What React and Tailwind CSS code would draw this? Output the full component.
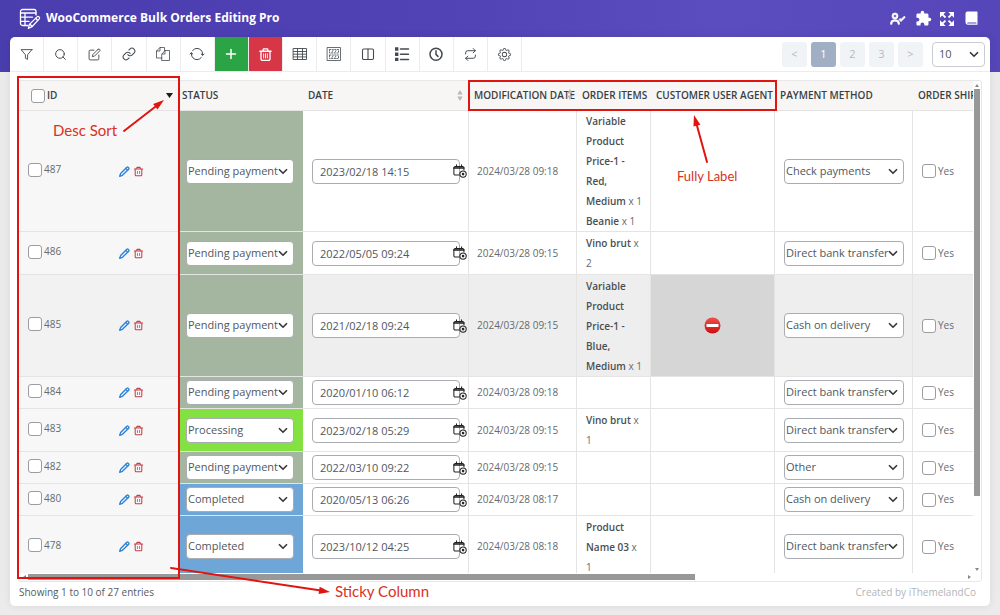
import React from "react";
import { FiFilter, FiSearch, FiEdit, FiLink, FiRepeat } from "react-icons/fi";
import { IoSyncOutline } from "react-icons/io5";
import { BiUserCheck } from "react-icons/bi";
import { MdExtension } from "react-icons/md";
import { ImEnlarge } from "react-icons/im";
import { BsGear } from "react-icons/bs";

function Svg({ size = 16, className = "", children, sw = 1.2 }) {
  return (
    <svg
      width={size}
      height={size}
      viewBox="0 0 16 16"
      fill="none"
      stroke="currentColor"
      strokeWidth={sw}
      strokeLinecap="round"
      strokeLinejoin="round"
      className={className}
      aria-hidden="true"
    >
      {children}
    </svg>
  );
}

const LogoIcon = () => (
  <svg width="22" height="22" viewBox="0 0 22 22" fill="none" stroke="currentColor" strokeWidth="1.3" strokeLinecap="round" strokeLinejoin="round" aria-hidden="true">
    <path d="M9 17.5H3.5A2 2 0 0 1 1.500 15.500V3.500A2 2 0 0 1 3.500 1.500H15A2 2 0 0 1 17 3.500V7" />
    <path d="M1.500 5H17M1.500 9.200H13.500M1.500 13.400H10M6 5V17.500" />
    <path d="M18.400 8.600a1.500 1.500 0 0 1 2 2L13 18.700l-3.600 1.700 1-4z" />
    <path d="M16.600 10.300l2.200 2.200M11 16.200l2 2.100" />
  </svg>
);

const BookIcon = () => (
  <svg width="13" height="15" viewBox="0 0 13 15" aria-hidden="true">
    <path fill="currentColor" fillRule="evenodd" d="M2.500 0.500H12a.5.5 0 0 1 .5.5V13.700H2.600A2.100 2.100 0 0 1 .5 11.600V2.500A2 2 0 0 1 2.500.5zM2.700 11.400a.6.600 0 0 0 0 1.200H11.400V11.400z" />
  </svg>
);

const PagesIcon = () => (
  <Svg sw={0.8}>
    <path d="M7 12H1.500V5L5 1.500H9.500V4.500" />
    <path d="M5 1.500V5H1.500" />
    <path d="M7 8L10 4.500H14.500V14.500H7z" />
    <path d="M10 4.500V8H7" />
  </Svg>
);

const TrashIcon = ({ size = 16, sw = 1.2, ribs = true }) => (
  <Svg size={size} sw={sw}>
    <path d="M2 4.500H14M5.500 4.300V2.800A.8.800 0 0 1 6.300 2H9.700A.8.800 0 0 1 10.500 2.800V4.300" />
    <path d="M3.200 4.600V12.800A1.500 1.500 0 0 0 4.700 14.300H11.300A1.500 1.500 0 0 0 12.800 12.800V4.600" />
    {ribs ? <path d="M6 7.200V11.600M8 7.200V11.600M10 7.200V11.600" strokeWidth="1" /> : <path d="M6.500 8V11M9.500 8V11" strokeWidth="1.100" />}
  </Svg>
);

const GridIcon = () => (
  <Svg sw={0.9}>
    <path d="M1.500 2.500H14.500V13.500H1.500zM1.500 5.500H14.500M1.500 8.200H14.500M1.500 10.900H14.500M5.500 2.500V13.500M10.500 2.500V13.500" />
  </Svg>
);

const RowsIcon = () => (
  <Svg sw={0.8}>
    <path d="M1.500 1.500H14.500V14.500H1.500z" />
    <path d="M3.500 3.500H12.500V7H3.500zM3.500 9H12.500V12.500H3.500z" strokeDasharray="1.200 1.400" />
    <path d="M6 6L7 4.500M9 6L10 4.500M6 11.500L7 10M9 11.500L10 10" />
  </Svg>
);

const ColumnsIcon = () => (
  <Svg sw={1.1}>
    <rect x="2.500" y="3" width="11" height="10.500" rx="1.200" />
    <path d="M8 3V13.500" />
  </Svg>
);

const ListIcon = () => (
  <Svg sw={1.5}>
    <path d="M6.500 3H14.500M6.500 8.200H14.500M6.500 13.400H14.500" />
    <path d="M1 1.300H4.400V4.700H1zM1 6.500H4.400V9.900H1zM1 11.700H4.400V15.100H1z" fill="currentColor" stroke="none" />
  </Svg>
);

const ClockIcon = () => (
  <Svg sw={1.5}>
    <circle cx="8" cy="8.200" r="6" />
    <path d="M8 4.800V8.400L10 10.400" />
  </Svg>
);

const PencilIcon = () => (
  <Svg size={11} sw={2}>
    <path d="M11.400 1.900a1.300 1.300 0 0 1 1.900 0l.8.800a1.300 1.300 0 0 1 0 1.900L5 13.600l-4 1.400 1.400-4z" />
    <path d="M10 3.500L12.500 6" />
  </Svg>
);

const CalendarIcon = () => (
  <Svg size={14} sw={1.2} className="text-[#222]">
    <path d="M7 12.500H2.500A1.500 1.500 0 0 1 1 11V4.500A1.500 1.500 0 0 1 2.500 3H11A1.500 1.500 0 0 1 12.500 4.500V6.500" />
    <path d="M1 4.500H12.500" strokeWidth="1.600" />
    <path d="M4 1V3M9.800 1V3" />
    <circle cx="11.500" cy="11.500" r="3.600" />
    <circle cx="11.500" cy="11.500" r="0.900" fill="currentColor" />
  </Svg>
);

const Chevron = ({ className = "" }) => (
  <svg width="10" height="7" viewBox="0 0 10 7" fill="none" stroke="#333" strokeWidth="1.600" className={className} aria-hidden="true">
    <path d="M1 1.200L5 5.200L9 1.200" />
  </svg>
);

const NoEntry = () => (
  <svg width="17" height="17" viewBox="0 0 17 17" role="img" aria-label="Not available">
    <defs>
      <linearGradient id="stop" x1="0" y1="0" x2="0" y2="1">
        <stop offset="0" stopColor="#f0504a" />
        <stop offset="1" stopColor="#cf0d0d" />
      </linearGradient>
    </defs>
    <circle cx="8.500" cy="8.500" r="8" fill="url(#stop)" />
    <rect x="2.500" y="7" width="12" height="3" rx="0.600" fill="#fff" />
  </svg>
);

const SortArrows = ({ className = "" }) => (
  <svg width="6" height="11" viewBox="0 0 6 11" fill="#b5b8bb" className={className} aria-hidden="true">
    <path d="M3 0L5.700 4.500H.3zM3 11L5.700 6.500H.3z" />
  </svg>
);

const tools = [
  ["Filter", <FiFilter size={13} strokeWidth={1.7} />],
  ["Search", <FiSearch size={13} strokeWidth={1.8} />],
  ["Bulk edit", <FiEdit size={13} strokeWidth={1.7} />],
  ["Bind edit", <FiLink size={14} strokeWidth={1.8} />],
  ["Duplicate", <PagesIcon />],
  ["Reload", <IoSyncOutline size={16} />],
  ["New order", <Svg sw={1.5}><path d="M8 3.500V12.500M3.500 8H12.500" /></Svg>],
  ["Delete", <TrashIcon size={15} sw={1.4} />],
  ["Column manager", <GridIcon />],
  ["Column profiles", <RowsIcon />],
  ["Sticky columns", <ColumnsIcon />],
  ["Meta fields", <ListIcon />],
  ["History", <ClockIcon />],
  ["Import and export", <FiRepeat size={13} strokeWidth={1.8} />],
  ["Settings", <BsGear size={13} />],
];

const toolStyle = {
  "New order": "bg-[#2ba446] text-white",
  Delete: "bg-[#d63646] text-white",
};

const STATUS_BG = {
  "Pending payment": "bg-[#a4b5a0]",
  Processing: "bg-[#83e241]",
  Completed: "bg-[#6ea6d8]",
};

const orders = [
  { id: 487, status: "Pending payment", date: "2023/02/18 14:15", mod: "2024/03/28 09:18", items: [["Variable Product Price-1 - Red, Medium", "1"], ["Beanie", "1"]], pay: "Check payments", h: "h-[121px]" },
  { id: 486, status: "Pending payment", date: "2022/05/05 09:24", mod: "2024/03/28 09:15", items: [["Vino brut", "2"]], pay: "Direct bank transfer", h: "h-[43px]" },
  { id: 485, status: "Pending payment", date: "2021/02/18 09:24", mod: "2024/03/28 09:15", items: [["Variable Product Price-1 - Blue, Medium", "1"]], pay: "Cash on delivery", h: "h-[102px]", active: true },
  { id: 484, status: "Pending payment", date: "2020/01/10 06:12", mod: "2024/03/28 09:18", items: [], pay: "Direct bank transfer", h: "h-[32px]" },
  { id: 483, status: "Processing", date: "2023/02/18 05:29", mod: "2024/03/28 09:15", items: [["Vino brut", "1"]], pay: "Direct bank transfer", h: "h-[43px]" },
  { id: 482, status: "Pending payment", date: "2022/03/10 09:22", mod: "2024/03/28 09:15", items: [], pay: "Other", h: "h-[32px]" },
  { id: 480, status: "Completed", date: "2020/05/13 06:26", mod: "2024/03/28 08:17", items: [], pay: "Cash on delivery", h: "h-[32px]" },
  { id: 478, status: "Completed", date: "2023/10/12 04:25", mod: "2024/03/28 08:18", items: [["Product Name 03", "1"]], pay: "Direct bank transfer", h: "h-[62px]" },
];

function Check({ label }) {
  return (
    <input
      type="checkbox"
      aria-label={label}
      className="size-[14px] shrink-0 appearance-none rounded-[3px] border border-[#9a9da1] bg-white checked:bg-[#5443b6]"
    />
  );
}

function Pick({ label, value, options, className }) {
  return (
    <div className={"relative " + className}>
      <select
        aria-label={label}
        defaultValue={value}
        className="block h-[25px] w-full appearance-none rounded-[4px] border border-[#a9acb0] bg-white pl-[1px] text-[11px] text-[#50575e]"
      >
        {options.map((o) => (
          <option key={o}>{o}</option>
        ))}
      </select>
      <Chevron className="pointer-events-none absolute right-[6px] top-[9px]" />
    </div>
  );
}

const cell = "border-b border-r border-[#e4e4e4] p-0";
const head = "border-b border-[#e4e4e4] bg-[#f7f6f5] p-0 pl-[5px] text-left font-semibold whitespace-nowrap";

function OrdersTable() {
  return (
    <table className="w-full min-w-[1060px] table-fixed border-separate border-spacing-0 text-[10px] text-[#666a6e]">
      <colgroup>
        <col className="w-[161px]" />
        <col className="w-[123px]" />
        <col className="w-[166px]" />
        <col className="w-[108px]" />
        <col className="w-[74px]" />
        <col className="w-[124px]" />
        <col className="w-[138px]" />
        <col />
      </colgroup>
      <thead>
        <tr className="h-[30px] text-[#3a3f44]">
          <th className={head}>
            <div className="flex items-center gap-[2px] pl-[7px] pr-[7px]">
              <Check label="Select all orders" />
              <span>ID</span>
              <svg width="7" height="5" viewBox="0 0 7 5" className="ml-auto" aria-hidden="true">
                <path d="M0 0H7L3.500 5z" fill="#1d1d1d" />
              </svg>
            </div>
          </th>
          <th className="border-b border-[#e4e4e4] bg-[#f7f6f5] p-0 pl-[2px] text-left font-semibold">STATUS</th>
          <th className={head}>
            <div className="flex items-center justify-between pr-[6px]">
              DATE
              <SortArrows />
            </div>
          </th>
          <th className={head}>
            <div className="relative">
              MODIFICATION DATE
              <SortArrows className="absolute right-[4px] top-[1px]" />
            </div>
          </th>
          <th className={head}>ORDER ITEMS</th>
          <th className={head}>CUSTOMER USER AGENT</th>
          <th className={head}>PAYMENT METHOD</th>
          <th className={head}>ORDER SHIPPING</th>
        </tr>
      </thead>
      <tbody>
        {orders.map((o) => (
          <tr key={o.id} className={o.h + (o.active ? " bg-[#eeeeee]" : " bg-white")}>
            <td className={"border-b border-[#e4e4e4] p-0 " + (o.active ? "bg-[#f2f2f2]" : "bg-[#f7f7f7]")}>
              <div className="flex items-center pl-[9px]">
                <label className="flex w-[91px] items-center gap-[2px] pb-[3px]">
                  <Check label={"Select order " + o.id} />
                  {o.id}
                </label>
                <button type="button" aria-label={"Edit order " + o.id} className="text-[#2f83d8]">
                  <PencilIcon />
                </button>
                <button type="button" aria-label={"Delete order " + o.id} className="ml-[3px] text-[#c43c48]">
                  <TrashIcon size={11} sw={1.5} ribs={false} />
                </button>
              </div>
            </td>
            <td className={"border-b border-[#e4e4e4] p-0 pl-[6px] " + STATUS_BG[o.status]}>
              <Pick label={"Status of order " + o.id} value={o.status} options={["Pending payment", "Processing", "Completed"]} className="w-[108px]" />
            </td>
            <td className={cell + " pl-[9px]"}>
              <div className="flex items-center">
                <input
                  type="text"
                  aria-label={"Date of order " + o.id}
                  defaultValue={o.date}
                  className="h-[25px] w-[148px] rounded-[4px] border border-[#a9acb0] bg-white pl-[7px] text-[11px] text-[#50575e]"
                />
                <button type="button" aria-label="Clear date" className="-ml-[7px]">
                  <CalendarIcon />
                </button>
              </div>
            </td>
            <td className={cell + " pl-[8px]"}>{o.mod}</td>
            <td className={cell + " pl-[9px] pr-[5px] leading-5"}>
              {o.items.map(([name, qty]) => (
                <div key={name}>
                  <span className="font-semibold text-[#4a4e52]">{name}</span> x {qty}
                </div>
              ))}
            </td>
            <td className={cell + (o.active ? " bg-[#d6d6d6]" : "")}>
              {o.active && (
                <div className="flex justify-center">
                  <NoEntry />
                </div>
              )}
            </td>
            <td className={cell + " pl-[9px]"}>
              <Pick label={"Payment method of order " + o.id} value={o.pay} options={["Check payments", "Direct bank transfer", "Cash on delivery", "Other"]} className="w-[120px]" />
            </td>
            <td className={cell + " pl-[9px]"}>
              <label className="flex items-center gap-[2px]">
                <Check label={"Order shipping of " + o.id} />
                Yes
              </label>
            </td>
          </tr>
        ))}
      </tbody>
    </table>
  );
}

function Arrow({ x1, y1, x2, y2 }) {
  const a = Math.atan2(y2 - y1, x2 - x1);
  const bx = x2 - 11 * Math.cos(a);
  const by = y2 - 11 * Math.sin(a);
  const px = 3.6 * Math.sin(a);
  const py = -3.6 * Math.cos(a);
  return (
    <g>
      <line x1={x1} y1={y1} x2={bx} y2={by} stroke="#e0150f" strokeWidth="2" strokeLinecap="round" />
      <path d={`M${x2} ${y2}L${bx + px} ${by + py}L${bx - px} ${by - py}z`} fill="#e0150f" />
    </g>
  );
}

const note = "absolute font-['Lato',sans-serif] leading-5 text-[#d93025] whitespace-nowrap";

function Annotations() {
  return (
    <div className="pointer-events-none absolute inset-0">
      <div className="absolute bottom-[27px] left-[7px] top-[39px] w-[163px] border-2 border-[#e0150f]" />
      <div className="absolute left-[458px] top-[43px] h-[31px] w-[309px] border-2 border-[#e0150f]" />
      <svg className="absolute inset-0 h-full w-full" aria-hidden="true">
        <Arrow x1={114} y1={94} x2={154} y2={63} />
        <Arrow x1={697} y1={125} x2={684} y2={78} />
        <Arrow x1={161} y1={531} x2={320} y2={555} />
      </svg>
      <span className={note + " left-[43px] top-[83px] text-[15px]"}>Desc Sort</span>
      <span className={note + " left-[667px] top-[129px] text-[13px]"}>Fully Label</span>
      <span className={note + " left-[325px] top-[544px] text-[15px]"}>Sticky Column</span>
    </div>
  );
}

const pageBtn = "flex size-[25px] items-center justify-center rounded-[3px] text-[11px]";

export default function App() {
  return (
    <div className="flex h-screen min-h-[400px] flex-col overflow-hidden bg-[#ebebeb] bg-[linear-gradient(90deg,#4a3dae,#5142b5_45%,#5b4dc0_72%,#5546b9)] bg-[length:100%_72px] bg-no-repeat px-[10px] pb-[9px] font-['Open_Sans',sans-serif] text-[#444a50]">
      <header className="flex h-[37px] shrink-0 items-center gap-[5px] pl-[9px] pr-[12px] text-white">
        <LogoIcon />
        <h1 className="pb-[2px] text-[12px] font-bold">WooCommerce Bulk Orders Editing Pro</h1>
        <nav className="ml-auto flex items-center gap-[8px]">
          <button type="button" aria-label="Activation"><BiUserCheck size={18} strokeWidth={1} /></button>
          <button type="button" aria-label="Add-ons"><MdExtension size={17} /></button>
          <button type="button" aria-label="Full screen"><ImEnlarge size={14} /></button>
          <button type="button" aria-label="Documentation" className="ml-[3px]"><BookIcon /></button>
        </nav>
      </header>

      <main className="relative flex min-h-0 flex-1 flex-col rounded-[5px] bg-white shadow-[0_0_8px_rgba(0,0,0,0.08)]">
        <div className="flex h-[35px] shrink-0 items-center justify-between border-b border-[#ececec] pr-[5px]">
          <div className="flex h-full w-[512px]">
            {tools.map(([name, icon]) => (
              <button
                key={name}
                type="button"
                aria-label={name}
                title={name}
                className={"flex h-[34px] flex-1 items-center justify-center border-r border-[#ececec] " + (toolStyle[name] || "first:rounded-tl-[5px]")}
              >
                {icon}
              </button>
            ))}
          </div>
          <div className="flex items-center gap-[4px]">
            <button type="button" aria-label="Previous page" className={pageBtn + " bg-[#f1f4f7] text-[#b4b9be]"}>&lt;</button>
            <button type="button" className={pageBtn + " bg-[#a1afc5] text-white"}>1</button>
            <button type="button" className={pageBtn + " bg-[#f1f4f7] text-[#b4b9be]"}>2</button>
            <button type="button" className={pageBtn + " bg-[#f1f4f7] text-[#b4b9be]"}>3</button>
            <button type="button" aria-label="Next page" className={pageBtn + " bg-[#f1f4f7] text-[#b4b9be]"}>&gt;</button>
            <div className="relative ml-[5px] w-[53px]">
              <select aria-label="Rows per page" className="block h-[25px] w-full appearance-none rounded-[4px] border border-[#c9ccd0] bg-white pl-[6px] text-[11px] text-[#50575e]">
                <option>10</option>
                <option>20</option>
                <option>50</option>
              </select>
              <Chevron className="pointer-events-none absolute right-[6px] top-[9px]" />
            </div>
          </div>
        </div>

        <div className="mx-[8px] mt-[8px] flex min-h-0 flex-1 flex-col rounded-[3px] border border-[#e8e8e8]">
          <div className="flex min-h-0 flex-1">
            <div className="min-w-0 flex-1 overflow-hidden">
              <OrdersTable />
            </div>
            <div className="flex w-[8px] shrink-0 flex-col items-center px-[1px] pb-[2px] pt-[3px]">
              <svg width="4" height="3" viewBox="0 0 4 3" aria-hidden="true"><path d="M2 0L4 3H0z" fill="#888" /></svg>
              <div className="mt-[2px] w-full flex-1">
                <div className="h-[85%] w-full bg-[#989898]" />
              </div>
              <svg width="4" height="3" viewBox="0 0 4 3" aria-hidden="true"><path d="M0 0H4L2 3z" fill="#888" /></svg>
            </div>
          </div>
          <div className="flex h-[8px] shrink-0 items-center pl-[4px] pr-[10px]">
            <svg width="3" height="4" viewBox="0 0 3 4" aria-hidden="true"><path d="M3 0V4L0 2z" fill="#888" /></svg>
            <div className="ml-[2px] h-[6px] flex-1">
              <div className="h-full w-[71%] bg-[#989898]" />
            </div>
            <svg width="3" height="4" viewBox="0 0 3 4" aria-hidden="true"><path d="M0 0V4L3 2z" fill="#888" /></svg>
          </div>
        </div>

        <footer className="flex h-[24px] shrink-0 items-center justify-between pb-[3px] pl-[9px] pr-[14px] text-[10px]">
          <span className="text-[#555b61]">Showing 1 to 10 of 27 entries</span>
          <span className="text-[#b3b5b8]">Created by iThemelandCo</span>
        </footer>
        <Annotations />
      </main>
    </div>
  );
}
